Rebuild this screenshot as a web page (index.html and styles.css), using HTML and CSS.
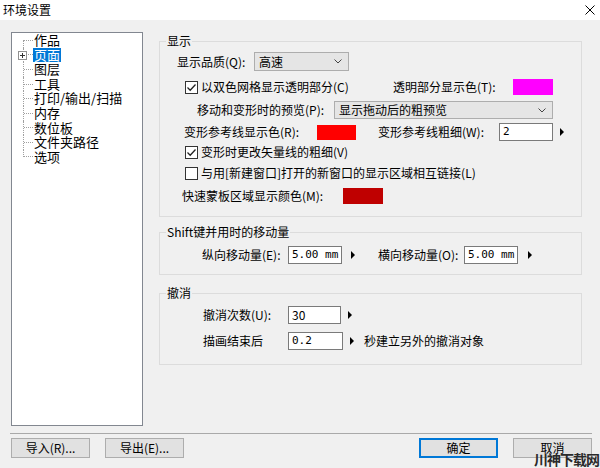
FILE: index.html
```html
<!DOCTYPE html>
<html lang="zh-CN">
<head>
<meta charset="utf-8">
<title>环境设置</title>
<link rel="stylesheet" href="styles.css">
</head>
<body>
<div class="titlebar">
  <span class="title">环境设置</span>
  <svg class="close" width="10" height="10" viewBox="0 0 10 10"><path d="M0.5 0.5L9.5 9.5M9.5 0.5L0.5 9.5" stroke="#000" stroke-width="1" fill="none"/></svg>
</div>

<div class="main">
  <ul class="tree">
    <li class="first"><span class="conn"></span><span class="node">作品</span></li>
    <li><span class="conn"><svg class="plus" width="9" height="9" viewBox="0 0 9 9"><rect x="0.5" y="0.5" width="8" height="8" fill="#fff" stroke="#919191"/><path d="M2 4.5H7M4.5 2V7" stroke="#333" stroke-width="1"/></svg></span><span class="node selected">页面</span></li>
    <li><span class="conn"></span><span class="node">图层</span></li>
    <li><span class="conn"></span><span class="node">工具</span></li>
    <li><span class="conn"></span><span class="node">打印/输出/扫描</span></li>
    <li><span class="conn"></span><span class="node">内存</span></li>
    <li><span class="conn"></span><span class="node">数位板</span></li>
    <li><span class="conn"></span><span class="node">文件夹路径</span></li>
    <li class="last"><span class="conn"></span><span class="node">选项</span></li>
  </ul>

  <div class="panel">
    <fieldset class="group group-display">
      <legend>显示</legend>
      <div class="row row-quality">
        <span class="label-quality">显示品质(Q):</span>
        <span class="select select-quality"><span>高速</span><svg width="8" height="5" viewBox="0 0 8 5"><path d="M0.5 0.5L4 4L7.5 0.5" stroke="#444" fill="none"/></svg></span>
      </div>
      <div class="row row-grid">
        <span class="check checked"><svg width="11" height="11" viewBox="0 0 11 11"><path d="M1.5 5.5L4.2 8.2L9.5 2.5" stroke="#222" stroke-width="1.3" fill="none"/></svg></span>
        <span>以双色网格显示透明部分(C)</span>
        <span class="right-pair">
          <span class="label-trans">透明部分显示色(T):</span>
          <span class="swatch swatch-magenta"></span>
        </span>
      </div>
      <div class="row row-preview">
        <span>移动和变形时的预览(P):</span>
        <span class="select select-preview"><span>显示拖动后的粗预览</span><svg width="8" height="5" viewBox="0 0 8 5"><path d="M0.5 0.5L4 4L7.5 0.5" stroke="#444" fill="none"/></svg></span>
      </div>
      <div class="row row-guide">
        <span class="label-guide">变形参考线显示色(R):</span>
        <span class="swatch swatch-red"></span>
        <span class="label-width">变形参考线粗细(W):</span>
        <span class="field field-width">2</span>
        <span class="arrow"></span>
      </div>
      <div class="row row-stroke">
        <span class="check checked"><svg width="11" height="11" viewBox="0 0 11 11"><path d="M1.5 5.5L4.2 8.2L9.5 2.5" stroke="#222" stroke-width="1.3" fill="none"/></svg></span>
        <span>变形时更改矢量线的粗细(V)</span>
      </div>
      <div class="row row-link">
        <span class="check"></span>
        <span>与用[新建窗口]打开的新窗口的显示区域相互链接(L)</span>
      </div>
      <div class="row row-mask">
        <span class="label-mask">快速蒙板区域显示颜色(M):</span>
        <span class="swatch swatch-darkred"></span>
      </div>
    </fieldset>

    <fieldset class="group group-shift">
      <legend>Shift键并用时的移动量</legend>
      <div class="row row-move">
        <span class="label-move">纵向移动量(E):</span>
        <span class="field field-mm">5.00 mm</span>
        <span class="arrow"></span>
        <span class="label-move label-move-h">横向移动量(O):</span>
        <span class="field field-mm">5.00 mm</span>
        <span class="arrow arrow-h"></span>
      </div>
    </fieldset>

    <fieldset class="group group-undo">
      <legend>撤消</legend>
      <div class="row row-undo-count">
        <span class="label-undo">撤消次数(U):</span>
        <span class="field field-count">30</span>
        <span class="arrow"></span>
      </div>
      <div class="row row-undo-after">
        <span class="label-undo">描画结束后</span>
        <span class="field field-seconds">0.2</span>
        <span class="arrow"></span>
        <span class="after-text">秒建立另外的撤消对象</span>
      </div>
    </fieldset>
  </div>
</div>

<div class="footer">
  <span class="btn btn-import">导入(R)...</span>
  <span class="btn btn-export">导出(E)...</span>
  <span class="btn btn-ok">确定</span>
  <span class="btn btn-cancel">取消</span>
</div>

<span class="watermark">川神下载网</span>
</body>
</html>
```

FILE: styles.css
```css
html, body {
  margin: 0;
  padding: 0;
}

body {
  width: 600px;
  height: 468px;
  overflow: hidden;
  position: relative;
  background: #f0f0f0;
  font-family: "Noto Sans CJK SC", "Noto Sans", sans-serif;
  font-size: 12px;
  line-height: 16px;
  color: #000;
}

/* Title bar */
.titlebar {
  height: 20px;
  background: #fff;
  display: flex;
  align-items: center;
  justify-content: space-between;
  padding: 0 5px 0 3px;
  box-sizing: border-box;
}

.title {
  font-size: 12px;
  line-height: 20px;
}

.close {
  display: block;
}

/* Main area */
.main {
  display: flex;
  height: 413px;
  box-sizing: border-box;
  padding: 12px 0 0 11px;
}

/* Tree */
.tree {
  list-style: none;
  margin: 0;
  padding: 0;
  width: 132px;
  height: 394px;
  box-sizing: border-box;
  border: 1px solid #828790;
  background: #fff;
  font-size: 13px;
}

.tree li {
  display: flex;
  align-items: center;
  height: 14.6px;
  line-height: 14.6px;
}

.conn {
  align-self: stretch;
  margin-left: 11px;
  width: 9px;
  border-left: 1px dotted #a0a0a0;
  display: flex;
  align-items: center;
  position: relative;
}

.conn::after {
  content: "";
  flex: 1;
  border-top: 1px dotted #a0a0a0;
}

.tree .first .conn {
  align-self: flex-end;
  height: 50%;
  align-items: flex-start;
}

.tree .last .conn {
  align-self: flex-start;
  height: 50%;
  align-items: flex-end;
}

.plus {
  position: absolute;
  left: -6px;
  top: 50%;
  margin-top: -4px;
  display: block;
}

.node {
  padding: 0 1px;
  white-space: nowrap;
}

.node.selected {
  background: #0078d7;
  color: #fff;
}

/* Right panel */
.panel {
  margin-left: 16px;
  width: 423px;
  padding-top: 1px;
}

.group {
  margin: 0;
  padding: 0;
  border: 1px solid #dcdcdc;
  min-width: 0;
}

.group legend {
  margin-left: 6px;
  padding: 0 1px;
  height: 16px;
  line-height: 16px;
  font-size: 12px;
}

.group-display {
  padding-bottom: 12px;
}

.group-shift {
  margin-top: 7px;
  padding-bottom: 10px;
}

.group-undo {
  margin-top: 10px;
  padding-bottom: 14px;
}

.row {
  display: flex;
  align-items: center;
  white-space: nowrap;
}

/* Display group rows */
.row-quality {
  margin-top: 3px;
  height: 19px;
  padding-left: 17px;
}

.label-quality {
  width: 77px;
}

.select {
  height: 19px;
  box-sizing: border-box;
  border: 1px solid #adadad;
  background: #e5e5e5;
  display: flex;
  align-items: center;
  justify-content: space-between;
  padding: 0 6px 0 4px;
}

.select svg {
  display: block;
}

.select-quality {
  width: 95px;
}

.row-grid {
  margin-top: 8px;
  height: 16px;
  padding-left: 25px;
  padding-right: 28px;
}

.check {
  width: 13px;
  height: 13px;
  box-sizing: border-box;
  border: 1px solid #333;
  background: #fff;
  margin-right: 3px;
  display: flex;
  align-items: center;
  justify-content: center;
}

.check svg {
  display: block;
}

.right-pair {
  margin-left: auto;
  display: flex;
  align-items: center;
}

.label-trans {
  width: 120px;
}

.swatch {
  width: 40px;
  height: 16px;
}

.swatch-magenta {
  background: #f0f;
}

.swatch-red {
  width: 39px;
  height: 15px;
  background: #f00;
}

.swatch-darkred {
  background: #bf0000;
}

.row-preview {
  margin-top: 6px;
  height: 18px;
  padding-left: 37px;
  padding-right: 28px;
}

.select-preview {
  margin-left: auto;
  width: 219px;
  height: 18px;
}

.row-guide {
  margin-top: 4px;
  height: 18px;
  padding-left: 24px;
}

.label-guide {
  width: 133px;
}

.label-width {
  margin-left: 22px;
  width: 121px;
}

.field {
  height: 18px;
  box-sizing: border-box;
  border: 1px solid #7a7a7a;
  background: #fff;
  padding-left: 3px;
  display: flex;
  align-items: center;
  font-family: "DejaVu Sans Mono", "Liberation Mono", monospace;
  font-size: 11px;
}

.field-width {
  width: 54px;
}

.arrow {
  width: 0;
  height: 0;
  border-left: 4px solid #000;
  border-top: 4px solid transparent;
  border-bottom: 4px solid transparent;
  margin-left: 7px;
}

.row-stroke {
  margin-top: 3px;
  height: 16px;
  padding-left: 25px;
}

.row-link {
  margin-top: 5px;
  height: 16px;
  padding-left: 25px;
}

.row-mask {
  margin-top: 6px;
  height: 17px;
  padding-left: 22px;
}

.label-mask {
  width: 161px;
}

/* Shift group */
.row-move {
  margin-top: 6px;
  height: 18px;
  padding-left: 42px;
}

.label-move {
  width: 86px;
}

.label-move-h {
  margin-left: 23px;
}

.field-mm {
  width: 54px;
}

.row-move .arrow {
  margin-left: 9px;
}

.row-move .arrow-h {
  margin-left: 10px;
}

/* Undo group */
.row-undo-count {
  margin-top: 5px;
  height: 18px;
  padding-left: 43px;
}

.row-undo-after {
  margin-top: 8px;
  height: 18px;
  padding-left: 43px;
}

.label-undo {
  width: 85px;
}

.field-count {
  width: 53px;
  font-family: "Noto Sans CJK SC", sans-serif;
  font-size: 12px;
}

.field-seconds {
  width: 55px;
}

.after-text {
  margin-left: 10px;
}

/* Footer */
.footer {
  margin-left: 10px;
  width: 582px;
  border-top: 1px solid #a9a9a9;
  padding-top: 4px;
  display: flex;
  box-sizing: border-box;
}

.btn {
  width: 79px;
  height: 20px;
  box-sizing: border-box;
  border: 1px solid #adadad;
  background: #e1e1e1;
  display: flex;
  align-items: center;
  justify-content: center;
  font-size: 12px;
}

.btn-import {
  margin-left: 1px;
}

.btn-export {
  margin-left: 15px;
}

.btn-ok {
  margin-left: auto;
  border-color: #0078d7;
  box-shadow: inset 0 0 0 1px #0078d7;
}

.btn-cancel {
  margin-left: 15px;
}

.watermark {
  position: absolute;
  right: 1px;
  top: 452px;
  font-size: 14px;
  line-height: 15px;
  font-weight: bold;
  color: #2a2a2a;
  letter-spacing: -1px;
}
```
